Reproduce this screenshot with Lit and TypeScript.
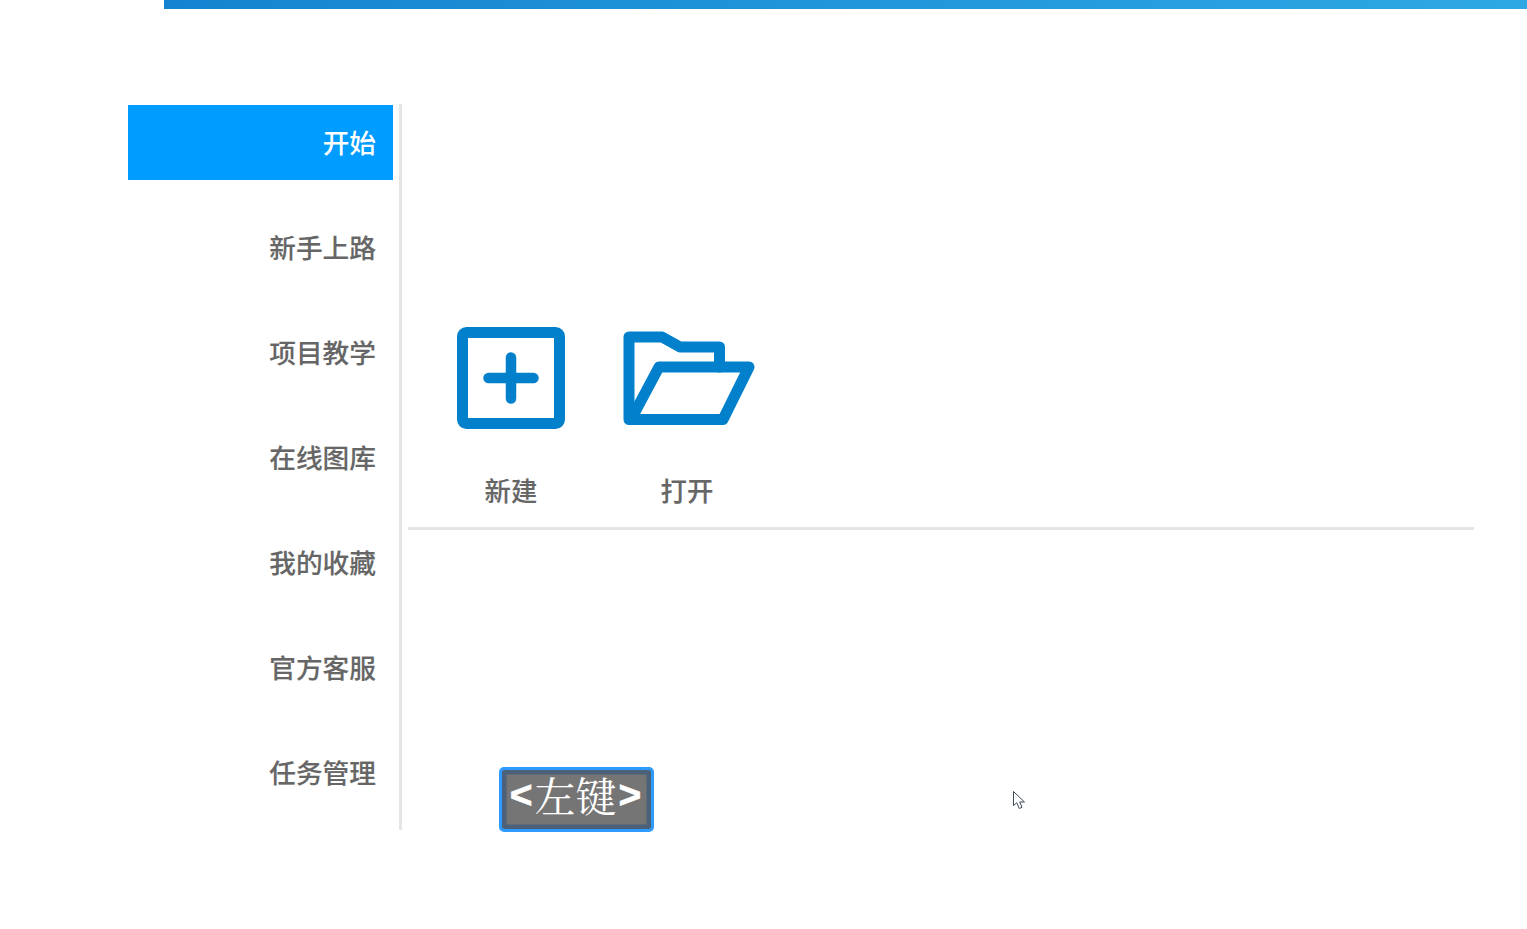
import { LitElement, html, css } from "lit";
import { customElement } from "lit/decorators.js";

const items = ["开始", "新手上路", "项目教学", "在线图库", "我的收藏", "官方客服", "任务管理"];

@customElement("app-root")
export class AppRoot extends LitElement {
  static styles = css`
    :host {
      display: block;
      position: relative;
      width: 1527px;
      height: 929px;
      background: #fff;
      overflow: hidden;
      font-family: "Open Sans", "Noto Sans CJK SC", sans-serif;
      color: #666;
    }
    .topbar {
      height: 9px;
      margin-left: 164px;
      background: linear-gradient(90deg, #1484d0 0%, #2ea8e4 100%);
    }
    .main {
      display: flex;
      margin-top: 95px;
      padding-left: 128px;
    }
    .side {
      box-sizing: border-box;
      width: 274px;
      height: 726px;
      padding-top: 1px;
      border-right: 3px solid #e5e5e5;
      display: flex;
      flex-direction: column;
      gap: 30px;
    }
    .item {
      box-sizing: border-box;
      width: 265px;
      height: 75px;
      padding-right: 17px;
      text-align: right;
      line-height: 76px;
      font-size: 26.7px;
      font-weight: 500;
      -webkit-text-stroke: 0.12px currentColor;
      color: #666;
    }
    .item.on {
      background: #009cff;
      color: #fff;
      -webkit-text-stroke: 0;
    }
    .content {
      width: 1066px;
      margin-left: 6px;
    }
    .tiles {
      box-sizing: border-box;
      height: 426px;
      border-bottom: 3px solid #e5e5e5;
      padding: 223px 0 0 49px;
      display: flex;
      gap: 58px;
    }
    .tile {
      display: flex;
      flex-direction: column;
      align-items: center;
      font-size: 26.4px;
      font-weight: 500;
      -webkit-text-stroke: 0.12px currentColor;
      color: #666;
    }
    .tile svg { display: block; }
    .tile-a { width: 108px; }
    .tile-b { width: 132px; margin-top: 4px; }
    .label { margin-top: 42px; line-height: 40px; white-space: nowrap; }
    .tile-b .label { margin-top: 46px; transform: translateX(-2px); }
    .key {
      position: absolute;
      left: 499px;
      top: 767px;
      box-sizing: border-box;
      width: 155px;
      height: 65px;
      border: 3px solid #2f9bff;
      border-radius: 5px;
      background: #757575;
      box-shadow: inset 0 0 0 4.500px #4a6179;
      color: #fff;
      display: flex;
      align-items: center;
      justify-content: center;
      gap: 2px;
      font-family: "Noto Serif CJK SC", "Liberation Serif", serif;
      font-size: 41px;
      line-height: 1;
      white-space: nowrap;
      padding: 0 2px 11px 0;
    }
    .key b {
      font-family: "Liberation Sans", sans-serif;
      font-weight: 700;
      font-size: 39px;
      -webkit-text-stroke: 0.6px #fff;
    }
    .cursor {
      position: absolute;
      left: 1012px;
      top: 790px;
    }
  `;

  render() {
    return html`
      <div class="topbar"></div>
      <div class="main">
        <div class="side">
          ${items.map((t, i) => html`<div class="item ${i === 0 ? "on" : ""}">${t}</div>`)}
        </div>
        <div class="content">
          <div class="tiles">
            <div class="tile tile-a">
              <svg width="108" height="102" viewBox="0 0 108 102" fill="none" stroke="#0280cb">
                <rect x="5.500" y="5.500" width="97" height="91" rx="4" stroke-width="11" />
                <path d="M54 30.500V71.500M31.500 51H76.500" stroke-width="10.500" stroke-linecap="round" />
              </svg>
              <div class="label">新建</div>
            </div>
            <div class="tile tile-b">
              <svg width="132" height="94" viewBox="0 0 132 94" fill="none" stroke="#0280cb" stroke-width="11" stroke-linejoin="round" stroke-linecap="round">
                <path d="M6 88.500V6H39L57 16H96.500V36" />
                <path d="M8 88.500H100L126 36H36L8 88.500Z" />
              </svg>
              <div class="label">打开</div>
            </div>
          </div>
        </div>
      </div>
      <div class="key"><b>&lt;</b><span>左键</span><b>&gt;</b></div>
      <svg class="cursor" width="16" height="20" viewBox="0 0 16 20" fill="#fff" stroke="#3c4a5a" stroke-width="1">
        <path d="M1.500 1.500V15.500L4.800 12.800L7.300 18.500L10 17.300L7.700 12H12.500Z" />
      </svg>
    `;
  }
}
